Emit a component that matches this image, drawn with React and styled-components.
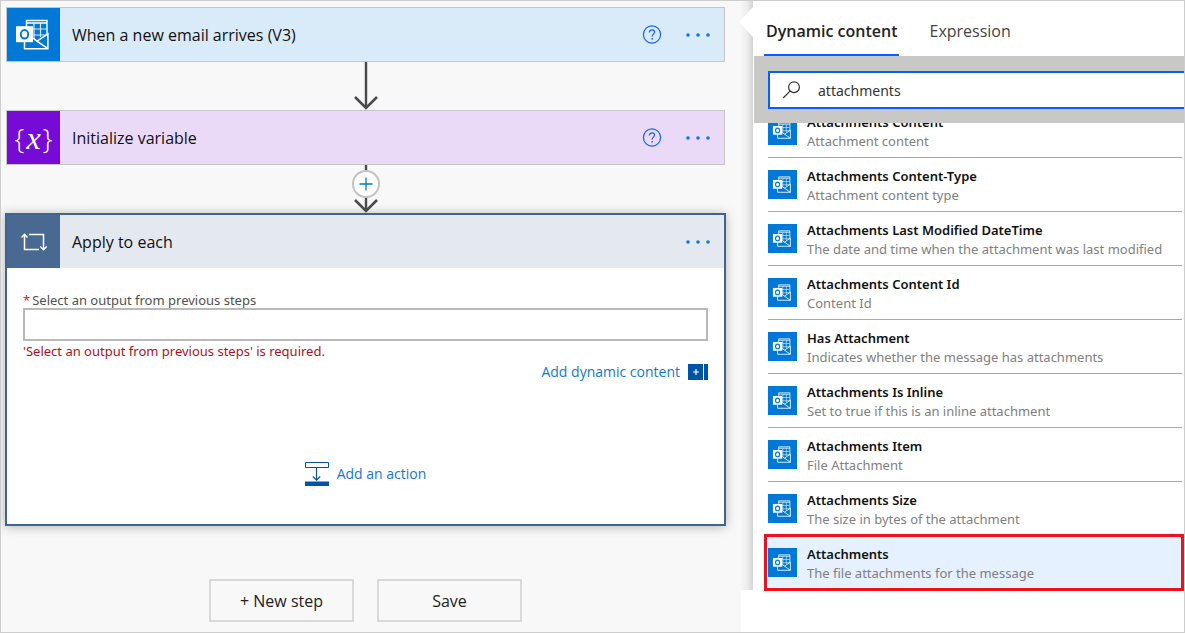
import React, { useState } from "react";
import styled, { createGlobalStyle } from "styled-components";

const smallFont = `"Noto Sans", "Open Sans", sans-serif`;

const GlobalStyle = createGlobalStyle`
  * { box-sizing: border-box; }
  body { margin: 0; background: #f8f8f8; }
  body, button, input {
    font-family: "Open Sans", "Noto Sans", sans-serif;
  }
  button { cursor: pointer; }
  svg { display: block; }
`;

const Page = styled.div`
  display: flex;
  min-height: 100vh;
  border: 1px solid #cdcdcd;
  background: #f8f8f8;
  overflow: hidden;
`;

/* ---------- Flow designer ---------- */

const Designer = styled.main`
  flex: 1;
  min-width: 0;
  display: flex;
  flex-direction: column;
  padding: 6px 16px 10px 5px;
`;

const Card = styled.section`
  border: 1px solid #c6c6c6;
  background: ${(p) => p.$tint};
`;

const ScopeCard = styled.section`
  margin: 0 -1px;
  border: 2px solid #3f6493;
  background: #fff;
  box-shadow: 0 1px 10px rgba(0, 0, 0, 0.28);
`;

const CardHeader = styled.header`
  display: flex;
  align-items: center;
  height: 53px;
  padding-right: 12px;
  background: ${(p) => p.$tint || "transparent"};
`;

const CardIcon = styled.span`
  display: flex;
  align-items: center;
  justify-content: center;
  width: 53px;
  height: 53px;
  background: ${(p) => p.$color};
  color: #fff;
`;

const CardTitle = styled.h2`
  flex: 1;
  margin: 0 0 0 12px;
  font-size: 16px;
  line-height: 24px;
  font-weight: 400;
  color: #111;
`;

const IconButton = styled.button`
  display: flex;
  align-items: center;
  justify-content: center;
  width: ${(p) => p.$width}px;
  height: 32px;
  margin-left: 20px;
  padding: 0;
  border: 0;
  background: none;
`;

const Braces = styled.span`
  display: flex;
  align-items: center;
  gap: 2px;
  font-size: 28px;
  font-weight: 300;
  line-height: 32px;
`;

const BracesName = styled.i`
  font-family: "Liberation Serif", serif;
  font-size: 32px;
`;

const Connector = styled.div`
  display: flex;
  justify-content: center;
  position: relative;
  height: 48px;
`;

const InsertButton = styled.button`
  position: absolute;
  top: 5px;
  left: 50%;
  margin-left: -14px;
  width: 28px;
  height: 28px;
  padding: 0;
  display: flex;
  align-items: center;
  justify-content: center;
  border: 2px solid #c3c3c3;
  border-radius: 50%;
  background: #fff;
`;

const ScopeBody = styled.div`
  display: flex;
  flex-direction: column;
  padding: 24px 16px 38px;
`;

const FieldLabel = styled.label`
  font-family: ${smallFont};
  font-size: 13px;
  line-height: 16px;
  color: #505050;
`;

const Required = styled.span`
  margin-right: 2px;
  color: #e02020;
`;

const OutputInput = styled.input`
  width: 100%;
  height: 33px;
  padding: 0 8px;
  border: 2px solid #b9b9b9;
  background: #fff;
  font-size: 14px;
`;

const ErrorText = styled.p`
  margin: 0;
  font-family: ${smallFont};
  font-size: 13px;
  line-height: 20px;
  color: #b01020;
`;

const LinkButton = styled.button`
  display: flex;
  align-items: center;
  gap: 8px;
  align-self: ${(p) => p.$align};
  margin-top: ${(p) => p.$top}px;
  padding: 0;
  border: 0;
  background: none;
  font-size: 14px;
  line-height: 20px;
  color: #1277d3;
`;

const Footer = styled.div`
  display: flex;
  justify-content: center;
  gap: 23px;
  margin-top: 53px;
`;

const FooterButton = styled.button`
  width: 145px;
  height: 43px;
  padding: 0;
  border: 2px solid #d9d9d9;
  background: #f8f8f8;
  font-size: 16px;
  color: #222;
`;

/* ---------- Dynamic content panel ---------- */

const Side = styled.div`
  flex: 0 0 443px;
  background: #fff;
`;

const Callout = styled.aside`
  display: flex;
`;

const CalloutEdge = styled.div`
  position: relative;
  flex: 0 0 12px;
  background: linear-gradient(to right, #f6f6f6, #eeeeee 50%, #d4d4d4);
`;

const Pointer = styled.svg`
  position: absolute;
  top: 6px;
  right: 0;
`;

const Panel = styled.div`
  flex: 1;
  min-width: 0;
  background: #fff;
`;

const Tabs = styled.div`
  display: flex;
  gap: 28px;
  padding-left: 11px;
  height: 55px;
`;

const Tab = styled.button`
  padding: 6px 2px 0;
  border: 0;
  border-bottom: 2px solid ${(p) => (p.$active ? "#0a5cff" : "transparent")};
  background: none;
  font-size: 16px;
  font-weight: ${(p) => (p.$active ? 600 : 400)};
  color: ${(p) => (p.$active ? "#222" : "#444")};
`;

const SearchBar = styled.div`
  position: relative;
  z-index: 1;
  margin-left: 1px;
  padding: 15px 0 14px 14px;
  background: #c8c9c7;
`;

const SearchBox = styled.label`
  display: flex;
  align-items: center;
  height: 38px;
  padding-left: 12px;
  gap: 17px;
  border: 2px solid #0a5cff;
  border-right: 0;
  background: #fff;
`;

const SearchInput = styled.input`
  flex: 1;
  min-width: 0;
  padding: 0;
  border: 0;
  outline: 0;
  background: none;
  font-family: ${smallFont};
  font-size: 14px;
  color: #333;
`;

const List = styled.ul`
  margin: -19px 0 0;
  padding: 0 2px 0 15px;
  list-style: none;
`;

const Item = styled.li`
  position: relative;
  height: 54px;
  border-bottom: ${(p) => (p.$marked ? 0 : "1px solid #a8a8a8")};
  background: ${(p) => (p.$marked ? "#e5f1ff" : "#fff")};
`;

const Marker = styled.span`
  position: absolute;
  inset: -2px -2px -1px -4px;
  border: 3px solid #ec111a;
  pointer-events: none;
`;

const ItemButton = styled.button`
  display: flex;
  align-items: center;
  gap: 10px;
  width: 100%;
  height: 53px;
  padding: 0;
  border: 0;
  background: none;
  text-align: left;
`;

const ItemIcon = styled.span`
  display: flex;
  flex: none;
  width: 29px;
  height: 29px;
  background: #0078d7;
`;

const ItemText = styled.span`
  display: flex;
  flex-direction: column;
  font-family: ${smallFont};
  white-space: nowrap;
`;

const ItemTitle = styled.span`
  font-size: 13px;
  line-height: 20px;
  font-weight: 600;
  color: #111;
`;

const ItemNote = styled.span`
  font-size: 13px;
  line-height: 18px;
  color: #808080;
`;

/* ---------- Drawings ---------- */

const OutlookIcon = ({ size }) => (
  <svg width={size} height={size} viewBox="0 0 53 53" fill="none" aria-hidden="true">
    <path d="M19.5 19V12.5H40v15M19.5 15H40" stroke="#fff" strokeWidth="1.4" />
    <path d="M27 15v16M33.5 15v14M26 21h14M26 27h14" stroke="#d5e9fa" strokeWidth="1.2" />
    <path d="M17.5 33v7.7h23.4V25.8L30 33.2l10.9 7.5M30 33.2l-4-3" stroke="#fff" strokeWidth="1.5" />
    <path d="M9 18.2h17v16H9z" fill="#fff" />
    <ellipse cx="17.5" cy="26.3" rx="3.7" ry="4.2" stroke="#0078d7" strokeWidth="2" />
  </svg>
);

const HelpIcon = () => (
  <svg width="20" height="20" viewBox="0 0 20 20" fill="none" aria-hidden="true">
    <circle cx="10" cy="9.5" r="8.6" stroke="#0f62fe" strokeWidth="1.2" />
    <path d="M7.4 7.4c0-1.6 1.1-2.6 2.6-2.6s2.6 1 2.6 2.3c0 2-2.5 2-2.5 4.3" stroke="#0f62fe" strokeWidth="1.2" />
    <circle cx="10.1" cy="13.8" r="0.9" fill="#0f62fe" />
  </svg>
);

const DotsIcon = () => (
  <svg width="24" height="4" viewBox="0 0 24 4" fill="#0f78d8" aria-hidden="true">
    <circle cx="2" cy="2" r="1.8" />
    <circle cx="12" cy="2" r="1.8" />
    <circle cx="22" cy="2" r="1.8" />
  </svg>
);

const LoopIcon = () => (
  <svg width="28" height="20" viewBox="0 0 28 20" fill="none" stroke="#fff" strokeWidth="1.5" aria-hidden="true">
    <path d="M4.5 2.5V17.5H19M1.5 5.5l3-3.2 3 3.2M9 2.5h14.5V17.5M20.3 14.5l3.2 3.2 3.2-3.2" />
  </svg>
);

const Arrow = () => (
  <svg width="26" height="48" viewBox="0 0 26 48" fill="none" stroke="#4a4a4a" aria-hidden="true">
    <path d="M13 0v46" strokeWidth="2.4" />
    <path d="M2 35l11 11 11-11" strokeWidth="2.6" />
  </svg>
);

const PlusIcon = () => (
  <svg width="14" height="14" viewBox="0 0 14 14" stroke="#0078d7" strokeWidth="1.3" aria-hidden="true">
    <path d="M7 .5v13M.5 7h13" />
  </svg>
);

const DynamicIcon = () => (
  <svg width="20" height="16" viewBox="0 0 20 16" aria-hidden="true">
    <path d="M0 0h15v16H0zM16 0h4v16h-4z" fill="#0054a6" />
    <path d="M8 5v6M5 8h6" stroke="#fff" strokeWidth="1.2" />
  </svg>
);

const ActionIcon = () => (
  <svg width="24" height="24" viewBox="0 0 24 24" fill="none" stroke="#0054a6" aria-hidden="true">
    <path d="M.5.5h23v5H.5z" />
    <path d="M11.5 6v12M7.8 14.5l3.7 3.7 3.7-3.7" strokeWidth="1.2" />
    <path d="M0 19.5h24V24H0z" fill="#0054a6" stroke="none" />
  </svg>
);

const SearchIcon = () => (
  <svg width="19" height="19" viewBox="0 0 19 19" fill="none" stroke="#333" strokeWidth="1.2" aria-hidden="true">
    <circle cx="12" cy="6.2" r="5.4" />
    <path d="M8 10.2L1.2 17" />
  </svg>
);

/* ---------- Page ---------- */

const items = [
  ["Attachments Content", "Attachment content"],
  ["Attachments Content-Type", "Attachment content type"],
  ["Attachments Last Modified DateTime", "The date and time when the attachment was last modified"],
  ["Attachments Content Id", "Content Id"],
  ["Has Attachment", "Indicates whether the message has attachments"],
  ["Attachments Is Inline", "Set to true if this is an inline attachment"],
  ["Attachments Item", "File Attachment"],
  ["Attachments Size", "The size in bytes of the attachment"],
  ["Attachments", "The file attachments for the message"],
];

const HeaderActions = ({ help }) => (
  <>
    {help && (
      <IconButton type="button" $width={24} aria-label="Help">
        <HelpIcon />
      </IconButton>
    )}
    <IconButton type="button" $width={28} aria-label="More options">
      <DotsIcon />
    </IconButton>
  </>
);

export default function App() {
  const [query, setQuery] = useState("attachments");
  const [output, setOutput] = useState("");

  return (
    <Page>
      <GlobalStyle />
      <Designer>
        <Card $tint="#d9eaf8">
          <CardHeader>
            <CardIcon $color="#0078d7"><OutlookIcon size={53} /></CardIcon>
            <CardTitle>When a new email arrives (V3)</CardTitle>
            <HeaderActions help />
          </CardHeader>
        </Card>
        <Connector><Arrow /></Connector>
        <Card $tint="#ebdaf7">
          <CardHeader>
            <CardIcon $color="#770bd6">
              <Braces aria-hidden="true">{"{"}<BracesName>x</BracesName>{"}"}</Braces>
            </CardIcon>
            <CardTitle>Initialize variable</CardTitle>
            <HeaderActions help />
          </CardHeader>
        </Card>
        <Connector>
          <Arrow />
          <InsertButton type="button" aria-label="Insert a step"><PlusIcon /></InsertButton>
        </Connector>
        <ScopeCard>
          <CardHeader $tint="#e4e8ef">
            <CardIcon $color="#486991"><LoopIcon /></CardIcon>
            <CardTitle>Apply to each</CardTitle>
            <HeaderActions />
          </CardHeader>
          <ScopeBody>
            <FieldLabel htmlFor="output"><Required>*</Required>Select an output from previous steps</FieldLabel>
            <OutputInput id="output" value={output} onChange={(e) => setOutput(e.target.value)} />
            <ErrorText>'Select an output from previous steps' is required.</ErrorText>
            <LinkButton type="button" $align="flex-end" $top={1}>
              Add dynamic content <DynamicIcon />
            </LinkButton>
            <LinkButton type="button" $align="center" $top={80}>
              <ActionIcon /> Add an action
            </LinkButton>
          </ScopeBody>
        </ScopeCard>
        <Footer>
          <FooterButton type="button">+ New step</FooterButton>
          <FooterButton type="button">Save</FooterButton>
        </Footer>
      </Designer>

      <Side>
        <Callout>
          <CalloutEdge>
            <Pointer width="14" height="30" viewBox="0 0 14 30" aria-hidden="true">
              <path d="M14 0L0 15l14 15z" fill="#fff" />
            </Pointer>
          </CalloutEdge>
          <Panel>
            <Tabs>
              <Tab type="button" $active>Dynamic content</Tab>
              <Tab type="button">Expression</Tab>
            </Tabs>
            <SearchBar>
              <SearchBox>
                <SearchIcon />
                <SearchInput
                  aria-label="Search dynamic content"
                  value={query}
                  onChange={(e) => setQuery(e.target.value)}
                />
              </SearchBox>
            </SearchBar>
            <List>
              {items.map(([title, note], i) => {
                const marked = i === items.length - 1;
                return (
                  <Item key={title} $marked={marked}>
                    <ItemButton type="button">
                      <ItemIcon><OutlookIcon size={29} /></ItemIcon>
                      <ItemText>
                        <ItemTitle>{title}</ItemTitle>
                        <ItemNote>{note}</ItemNote>
                      </ItemText>
                    </ItemButton>
                    {marked && <Marker />}
                  </Item>
                );
              })}
            </List>
          </Panel>
        </Callout>
      </Side>
    </Page>
  );
}
